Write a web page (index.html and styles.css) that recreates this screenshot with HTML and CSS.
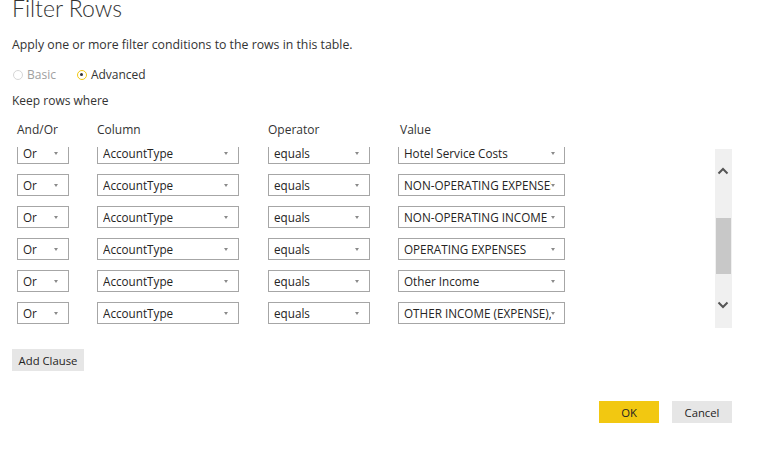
FILE: index.html
```html
<!DOCTYPE html>
<html>
<head>
<meta charset="utf-8">
<link rel="stylesheet" href="styles.css">
</head>
<body>
<div class="dialog">
  <h1 class="title">Filter Rows</h1>
  <p class="desc">Apply one or more filter conditions to the rows in this table.</p>
  <div class="radios">
    <label class="radio disabled"><span class="dot"></span>Basic</label>
    <label class="radio checked"><span class="dot"></span>Advanced</label>
  </div>
  <p class="keep">Keep rows where</p>
  <div class="cols head">
    <span class="c1">And/Or</span>
    <span class="c2">Column</span>
    <span class="c3">Operator</span>
    <span class="c4">Value</span>
  </div>
  <div class="scroller">
    <div class="clip">
      <div class="rows">
        <div class="cols row">
          <div class="sel c1"><span>Or</span></div><div class="sel c2"><span>AccountType</span></div><div class="sel c3"><span>equals</span></div><div class="sel c4"><span>Hotel Service Costs</span></div>
        </div>
        <div class="cols row">
          <div class="sel c1"><span>Or</span></div><div class="sel c2"><span>AccountType</span></div><div class="sel c3"><span>equals</span></div><div class="sel c4"><span>NON-OPERATING EXPENSES</span></div>
        </div>
        <div class="cols row">
          <div class="sel c1"><span>Or</span></div><div class="sel c2"><span>AccountType</span></div><div class="sel c3"><span>equals</span></div><div class="sel c4"><span>NON-OPERATING INCOME</span></div>
        </div>
        <div class="cols row">
          <div class="sel c1"><span>Or</span></div><div class="sel c2"><span>AccountType</span></div><div class="sel c3"><span>equals</span></div><div class="sel c4"><span>OPERATING EXPENSES</span></div>
        </div>
        <div class="cols row">
          <div class="sel c1"><span>Or</span></div><div class="sel c2"><span>AccountType</span></div><div class="sel c3"><span>equals</span></div><div class="sel c4"><span>Other Income</span></div>
        </div>
        <div class="cols row">
          <div class="sel c1"><span>Or</span></div><div class="sel c2"><span>AccountType</span></div><div class="sel c3"><span>equals</span></div><div class="sel c4"><span>OTHER INCOME (EXPENSE), NET</span></div>
        </div>
      </div>
    </div>
    <div class="scrollbar">
      <svg class="arrow up" width="12" height="8" viewBox="0 0 12 8"><path d="M1.5 6.5 L6 2 L10.5 6.5" fill="none" stroke="#555" stroke-width="2"/></svg>
      <div class="thumb"></div>
      <svg class="arrow down" width="12" height="8" viewBox="0 0 12 8"><path d="M1.5 1.5 L6 6 L10.5 1.5" fill="none" stroke="#555" stroke-width="2"/></svg>
    </div>
  </div>
  <button class="btn add">Add Clause</button>
  <div class="actions">
    <button class="btn ok">OK</button>
    <button class="btn cancel">Cancel</button>
  </div>
</div>
</body>
</html>
```

FILE: styles.css
```css
* { box-sizing: border-box; }
html, body { margin: 0; padding: 0; background: #fff; }
body {
  font-family: "Open Sans", "Noto Sans", sans-serif;
  font-size: 12px;
  color: #333;
  width: 761px;
  height: 452px;
  overflow: hidden;
}
.dialog { padding-left: 12px; }
.title {
  margin: -6px 0 0 0;
  font-family: "Lato", "Open Sans", sans-serif;
  font-size: 23px;
  font-weight: 300;
  line-height: 28px;
  color: #333;
}
.desc { margin: 15px 0 0 0; line-height: 16px; font-size: 12.3px; color: #333; }
.radios { margin-top: 14px; display: flex; height: 16px; align-items: center; }
.radio { display: flex; align-items: center; line-height: 16px; }
.radio .dot {
  width: 10px; height: 10px; border-radius: 50%;
  margin: 0 4px 0 1px; position: relative;
}
.radio.disabled { color: #a0a0a0; margin-right: 20px; }
.radio.disabled .dot { border: 1px solid #d6d6d6; }
.radio.checked .dot { border: 1.5px solid #f2c811; }
.radio.checked .dot::after {
  content: ""; position: absolute; left: 2px; top: 2px;
  width: 3px; height: 3px; border-radius: 50%; background: #333;
}
.keep { margin: 10px 0 0 0; line-height: 16px; }
.cols { display: flex; padding-left: 5px; }
.head { margin-top: 13px; line-height: 16px; }
.head span { display: block; }
.head .c4 { padding-left: 2px; }
.c1 { width: 52px; margin-right: 28px; }
.c2 { width: 142px; margin-right: 29px; }
.c3 { width: 102px; margin-right: 28px; }
.c4 { width: 167px; }
.scroller { display: flex; margin-top: 9px; height: 182px; }
.clip { width: 703px; height: 182px; overflow: hidden; }
.rows { margin-top: -5px; display: flex; flex-direction: column; gap: 10px; }
.sel {
  height: 22px;
  border: 1px solid #a6a6a6;
  padding: 0 0 0 5px;
  line-height: 20px;
  font-size: 11.7px;
  position: relative;
  color: #252423;
}
.sel span {
  display: block;
  white-space: nowrap;
  overflow: hidden;
  margin-right: 14px;
}
.sel.c4 span { margin-right: 13px; }
.sel::after {
  content: "";
  position: absolute;
  right: 10px; top: 9px;
  border-left: 2.5px solid transparent;
  border-right: 2.5px solid transparent;
  border-top: 3px solid #8a8a8a;
}
.sel.c4::after { right: 9px; }
.scrollbar {
  width: 17px; height: 179px; margin-top: 2px;
  background: #f0f0f0; position: relative;
}
.arrow { position: absolute; left: 2px; }
.arrow.up { top: 18px; }
.arrow.down { top: 152px; }
.thumb { position: absolute; left: 1px; top: 69px; width: 15px; height: 56px; background: #c8c8c8; }
.btn {
  font-family: inherit; font-size: 11.3px; color: #252423;
  border: none; height: 22px; padding: 0; margin: 0;
  background: #e6e6e6; display: block;
}
.add { width: 72px; margin-top: 20px; }
.actions { display: flex; justify-content: flex-end; gap: 13px; margin-top: 30px; padding-right: 29px; }
.ok { width: 60px; background: #f2c811; }
.cancel { width: 60px; }
```
